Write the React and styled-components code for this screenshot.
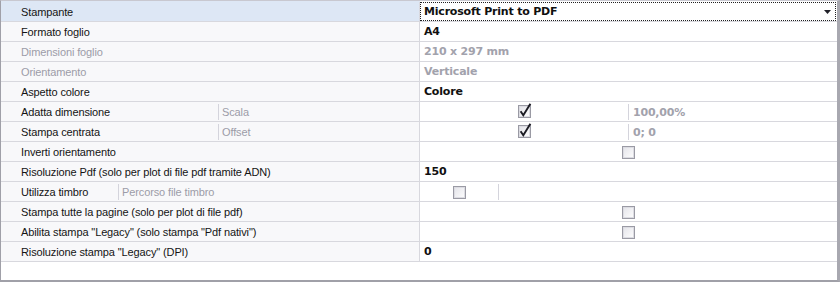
import React from 'react'
import styled, { createGlobalStyle } from 'styled-components'

const Global = createGlobalStyle`
  html, body { margin: 0; padding: 0; background: #ffffff; }
  body { font-family: "Liberation Sans", Arial, sans-serif; }
`;

const Grid = styled.div`
  box-sizing: border-box;
  width: 840px;
  height: 282px;
  border-left: 1px solid #a0a0a8;
  border-top: 1px solid #c8c8d0;
  border-right: 3px solid #a8a8b0;
  border-bottom: 2px solid #a0a0a8;
  background: #ffffff;
  display: flex;
  flex-direction: column;
`;

const Row = styled.div`
  display: flex;
  height: 19px;
  padding-top: ${p => (p.$first ? 1 : 0)}px;
  border-bottom: 1px solid #d8d8de;
  flex-shrink: 0;
  background: ${p => (p.$first ? 'linear-gradient(90deg, #dde7f5 419px, #ffffff 419px)' : 'transparent')};
`;

const LabelCell = styled.div`
  width: 418px;
  display: flex;
  align-items: stretch;
  background: ${p => (p.$selected ? '#dde7f5' : '#f8f8fa')};
  border-right: 1px solid #d8d8de;
`;

const Label = styled.span`
  display: flex;
  align-items: center;
  box-sizing: border-box;
  padding-left: 20px;
  width: ${p => (p.$width ? `${p.$width}px` : 'auto')};
  flex-shrink: 0;
  font-size: 11px;
  letter-spacing: -0.12px;
  color: ${p => (p.$disabled ? '#9c9ca8' : '#141414')};
  white-space: nowrap;
`;

const SubLabel = styled.span`
  display: flex;
  align-items: center;
  margin: 2px 0 1px;
  padding-left: 3px;
  border-left: 1px solid #d4d4dc;
  font-size: 11px;
  letter-spacing: -0.12px;
  color: #9c9ca8;
  white-space: nowrap;
`;

const ValueCell = styled.div`
  flex: 1;
  display: flex;
  align-items: stretch;
  position: relative;
  background: #ffffff;
  margin-right: 1px;
`;

const Focus = styled.div`
  position: absolute;
  inset: 0 0 0 0;
  border: 1px dotted #202020;
  pointer-events: none;
`;

const Value = styled.span`
  display: flex;
  align-items: center;
  padding-left: 4px;
  font-family: "DejaVu Sans", Verdana, sans-serif;
  font-weight: bold;
  font-size: 11px;
  letter-spacing: -0.2px;
  color: ${p => (p.$disabled ? '#a2a2ac' : '#101010')};
  white-space: nowrap;
  flex: 1;
`;

const CheckSlot = styled.div`
  display: flex;
  align-items: center;
  justify-content: center;
  width: ${p => (p.$width ? `${p.$width}px` : 'auto')};
  flex: ${p => (p.$width ? '0 0 auto' : '1')};
`;

const Extra = styled.span`
  display: flex;
  align-items: center;
  flex: 1;
  margin: 2px 0 1px;
  padding-left: 4px;
  border-left: 1px solid #d4d4dc;
  font-family: "DejaVu Sans", Verdana, sans-serif;
  font-weight: bold;
  font-size: 11px;
  letter-spacing: -0.2px;
  color: #a2a2ac;
  white-space: nowrap;
`;

const Arrow = styled.svg`
  position: absolute;
  right: 5px;
  top: 8px;
`;

function Check({ checked }) {
  return (
    <svg width="15" height="16" viewBox="0 0 15 16" style={{ marginTop: checked ? -2 : 0 }}>
      <defs>
        <linearGradient id="cbg" x1="0" y1="0" x2="1" y2="1">
          <stop offset="0" stopColor="#e2e2e8" />
          <stop offset="1" stopColor="#ffffff" />
        </linearGradient>
      </defs>
      <rect x="1.5" y="2.5" width="12" height="12" fill="url(#cbg)" stroke="#9a9aa4" />
      <rect x="2.5" y="3.5" width="10" height="10" fill="none" stroke="#dcdce2" />
      {checked && (
        <path d="M3.6 8.2 L6.3 12.2 L13.4 0.8" fill="none" stroke="#1c1c24" strokeWidth="1.9" />
      )}
    </svg>
  )
}

const rows = [
  { label: 'Stampante', value: 'Microsoft Print to PDF', selected: true },
  { label: 'Formato foglio', value: 'A4' },
  { label: 'Dimensioni foglio', value: '210 x 297 mm', disabled: true },
  { label: 'Orientamento', value: 'Verticale', disabled: true },
  { label: 'Aspetto colore', value: 'Colore' },
  { label: 'Adatta dimensione', sub: 'Scala', subAt: 217, check: true, checked: true, slot: 208, extra: '100,00%' },
  { label: 'Stampa centrata', sub: 'Offset', subAt: 217, check: true, checked: true, slot: 208, extra: '0; 0' },
  { label: 'Inverti orientamento', check: true },
  { label: 'Risoluzione Pdf (solo per plot di file pdf tramite ADN)', value: '150' },
  { label: 'Utilizza timbro', sub: 'Percorso file timbro', subAt: 117, check: true, slot: 78, extra: '' },
  { label: 'Stampa tutte la pagine (solo per plot di file pdf)', check: true },
  { label: 'Abilita stampa "Legacy" (solo stampa "Pdf nativi")', check: true },
  { label: 'Risoluzione stampa "Legacy" (DPI)', value: '0' },
]

export default function App() {
  return (
    <>
      <Global />
      <Grid>
        {rows.map((r, i) => (
          <Row key={i} $first={i === 0}>
            <LabelCell $selected={r.selected}>
              <Label $disabled={r.disabled} $width={r.subAt}>{r.label}</Label>
              {r.sub && <SubLabel>{r.sub}</SubLabel>}
            </LabelCell>
            <ValueCell>
              {r.check ? (
                <>
                  <CheckSlot $width={r.slot}><Check checked={r.checked} /></CheckSlot>
                  {r.slot && <Extra>{r.extra}</Extra>}
                </>
              ) : (
                <Value $disabled={r.disabled}>{r.value}</Value>
              )}
              {r.selected && (
                <>
                  <Focus />
                  <Arrow width="7" height="4" viewBox="0 0 7 4">
                    <path d="M0 0 H7 L3.5 4 Z" fill="#202028" />
                  </Arrow>
                </>
              )}
            </ValueCell>
          </Row>
        ))}
      </Grid>
    </>
  )
}
